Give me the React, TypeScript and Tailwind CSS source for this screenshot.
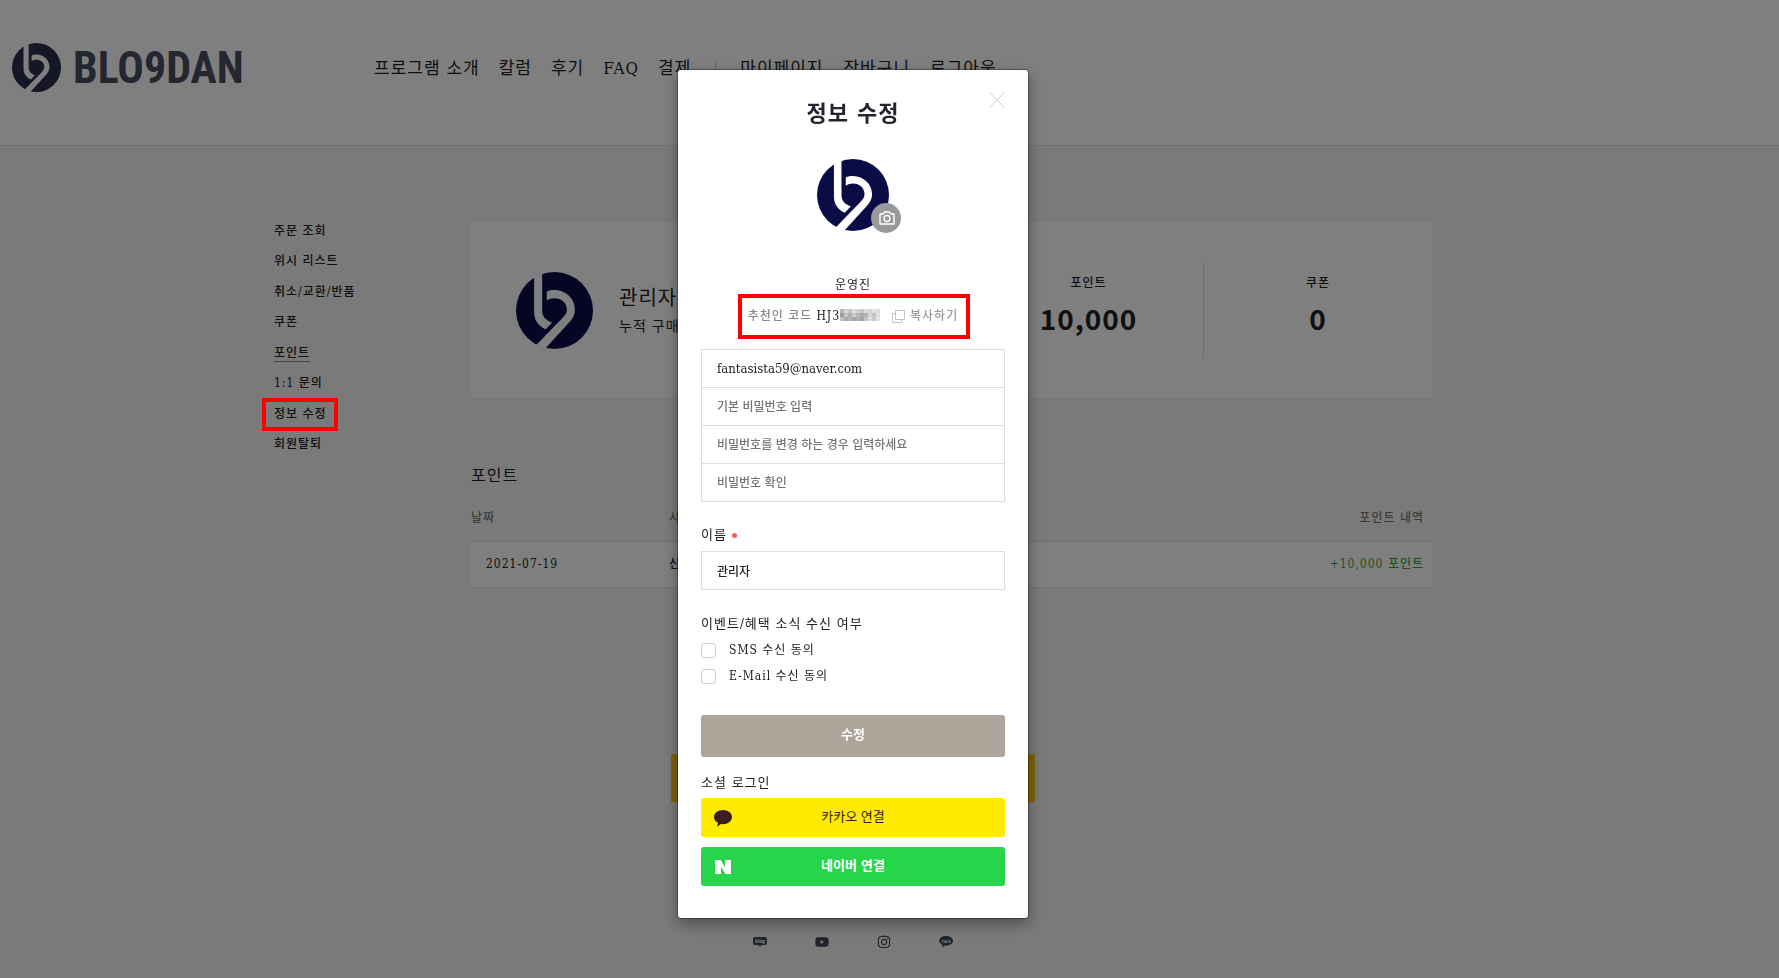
import type { ReactNode } from 'react';
import { FaYoutube, FaInstagram } from 'react-icons/fa';

const mainNav = ['프로그램 소개', '칼럼', '후기', 'FAQ', '결제'];
const userNav = ['마이페이지', '장바구니', '로그아웃'];

const sideMenu = [
  { label: '주문 조회' },
  { label: '위시 리스트' },
  { label: '취소/교환/반품' },
  { label: '쿠폰' },
  { label: '포인트', active: true },
  { label: '1:1 문의' },
  { label: '정보 수정', marked: true },
  { label: '회원탈퇴' },
];

const stats = [
  { label: '포인트', value: '10,000' },
  { label: '쿠폰', value: '0' },
];

const accountFields = [
  { id: 'email', label: '이메일', type: 'email', value: 'fantasista59@naver.com' },
  { id: 'password', label: '기본 비밀번호 입력', type: 'password' },
  { id: 'new-password', label: '비밀번호를 변경 하는 경우 입력하세요', type: 'password' },
  { id: 'confirm-password', label: '비밀번호 확인', type: 'password' },
];

const agreements = [
  { id: 'sms', label: 'SMS 수신 동의' },
  { id: 'mail', label: 'E-Mail 수신 동의' },
];

// grey blocks that hide the rest of the referral code
const mosaic = [
  ['#b4b4b4', '#d2d2d2', '#c4c4c4', '#dcdcdc', '#d0d0d0', '#c8c8c8', '#dedede', '#d4d4d4', '#e2e2e2', '#dadada'],
  ['#9c9c9c', '#c6c6c6', '#b0b0b0', '#cacaca', '#b8b8b8', '#aaaaaa', '#b2b2b2', '#d8d8d8', '#c2c2c2', '#e0e0e0'],
  ['#c0c0c0', '#a8a8a8', '#b4b4b4', '#a6a6a6', '#b0b0b0', '#a2a2a2', '#c4c4c4', '#dcdcdc', '#c8c8c8', '#e4e4e4'],
];

const inputClass =
  'block h-[39px] w-full border border-[#dddddd] bg-white px-[15px] font-medium tracking-normal text-[#212121] placeholder:text-[#757575] outline-none';

function LogoMark({ className }: { className: string }) {
  return (
    <svg viewBox="0 0 100 100" className={className} aria-hidden="true">
      <circle cx="50" cy="50" r="50" fill="currentColor" />
      <g fill="#fff">
        <path d="M23.500 0V52C23.500 63 29 70 38.500 74.500L47 65.500C39 63.500 34 58 34 50V0z" />
        <path d="M40 25.500C43 24 46 23.500 50 23.500C65 23.500 76.500 35 76.500 49C76.500 55 74 60 69.500 65L37.500 100L26 95L60 60C64 56 66 53 66 49C66 40 59 34 50 34C46 34 43 35 40 37z" />
      </g>
    </svg>
  );
}

function Header() {
  return (
    <header className="flex h-[146px] items-start border-b border-[#e5e5e5] bg-white pl-3">
      <a href="#" className="mt-[43px] flex w-[362px] items-center gap-3">
        <LogoMark className="size-[49px] text-[#2a2d4d]" />
        <span className="pt-0.5 font-['Liberation_Sans_Narrow','Roboto_Condensed',sans-serif] text-[44px] leading-[47px] font-bold tracking-normal text-[#484c60]">
          BLO9DAN
        </span>
      </a>
      <nav className="mt-14 flex items-center text-[17px] leading-6">
        <ul className="flex gap-[19px]">
          {mainNav.map((item) => (
            <li key={item}>
              <a href="#">{item}</a>
            </li>
          ))}
        </ul>
        <span className="mx-6 h-3 w-px bg-[#cccccc]" />
        <ul className="flex gap-5">
          {userNav.map((item) => (
            <li key={item}>
              <a href="#">{item}</a>
            </li>
          ))}
        </ul>
      </nav>
    </header>
  );
}

function SideMenu() {
  return (
    <ul className="flex h-[229px] w-[197px] shrink-0 flex-col justify-between text-xs font-medium">
      {sideMenu.map((item) => (
        <li key={item.label} className="relative flex h-4 items-start leading-4">
          <a href="#" className={item.active ? 'border-b border-[#888888]' : ''}>
            {item.label}
          </a>
          {item.marked && (
            <span className="absolute -top-2 -left-3 z-20 h-[33px] w-[76px] border-4 border-[#ff0000]" />
          )}
        </li>
      ))}
    </ul>
  );
}

function Summary() {
  return (
    <section className="flex h-44 items-center bg-white">
      <div className="flex flex-1 items-center pl-[45px]">
        <LogoMark className="size-[77px] text-[#0a0c46]" />
        <div className="ml-[26px]">
          <p className="text-[20px] leading-8">관리자</p>
          <p className="text-sm leading-6">누적 구매금액</p>
        </div>
      </div>
      {stats.map((stat, i) => (
        <dl
          key={stat.label}
          className={
            i === 0
              ? 'flex h-24 w-[229px] flex-col items-center pt-[11px]'
              : 'flex h-24 w-[229px] flex-col items-center border-l border-[#dddddd] pt-[11px]'
          }
        >
          <dt className="text-xs leading-5 font-medium">{stat.label}</dt>
          <dd className="mt-[5px] font-['Noto_Sans_CJK_KR',sans-serif] text-[28px] leading-10 font-bold text-[#212121]">
            {stat.value}
          </dd>
        </dl>
      ))}
    </section>
  );
}

function History() {
  return (
    <section className="mt-[66px]">
      <h2 className="text-base leading-6">포인트</h2>
      <table className="mt-[15px] w-full text-left text-xs font-medium">
        <thead>
          <tr className="h-[38px] text-[#777777]">
            <th className="w-[198px] pb-2 font-medium">날짜</th>
            <th className="pb-2 font-medium">사유</th>
            <th className="pr-2 pb-2 text-right font-medium">포인트 내역</th>
          </tr>
        </thead>
        <tbody>
          <tr className="h-[46px] border-y border-[#e0e0e0] bg-white">
            <td className="pl-[15px]">2021-07-19</td>
            <td>신규가입</td>
            <td className="pr-2 text-right text-[#3fa33f]">+10,000 포인트</td>
          </tr>
        </tbody>
      </table>
    </section>
  );
}

function Footer() {
  return (
    <footer className="mt-[133px] flex items-center justify-center gap-12 text-[#404458]">
      <a href="#" aria-label="블로그">
        <svg viewBox="0 0 14 14" className="size-3.5">
          <path d="M2 2h10a2 2 0 0 1 2 2v4a2 2 0 0 1-2 2H8.500L7 12 5.500 10H2a2 2 0 0 1-2-2V4a2 2 0 0 1 2-2z" fill="currentColor" />
          <text x="7" y="8" textAnchor="middle" fontSize="5" fontWeight="700" fill="#f5f5f5" letterSpacing="0" fontFamily="Roboto">
            blog
          </text>
        </svg>
      </a>
      <a href="#" aria-label="유튜브">
        <FaYoutube className="size-3.5" />
      </a>
      <a href="#" aria-label="인스타그램">
        <FaInstagram className="size-3.5" />
      </a>
      <a href="#" aria-label="카카오톡">
        <svg viewBox="0 0 14 14" className="size-3.5">
          <path d="M7 1c3.900 0 7 2.100 7 4.800s-3.100 4.900-7 4.900l-1.200-.1L3 12.800l.6-2.900C1.500 9.100.2 7.600.2 5.800.2 3.100 3.100 1 7 1z" fill="currentColor" />
          <text x="7" y="7.500" textAnchor="middle" fontSize="4" fontWeight="700" fill="#f5f5f5" letterSpacing="0" fontFamily="Roboto">
            TALK
          </text>
        </svg>
      </a>
    </footer>
  );
}

function SocialButton({ icon, className, children }: { icon: ReactNode; className: string; children: ReactNode }) {
  return (
    <button type="button" className={`relative h-[39px] w-full rounded-[3px] text-[13px] tracking-normal ${className}`}>
      <span className="absolute inset-y-0 left-3 flex w-5 items-center justify-center">{icon}</span>
      {children}
    </button>
  );
}

function ProfileModal() {
  return (
    <div role="dialog" aria-labelledby="modal-title" className="relative mx-auto mt-[70px] w-[350px] rounded-[3px] bg-white px-[23px] pt-[27px] pb-8 shadow-[0_0_0_1px_rgba(0,0,0,0.3),0_5px_15px_rgba(0,0,0,0.4)]">
      <button type="button" aria-label="닫기" className="absolute top-[22px] right-[23px]">
        <svg viewBox="0 0 16 16" className="size-4" stroke="#d0d0d0">
          <path d="M.5.5l15 15M15.500.5l-15 15" />
        </svg>
      </button>
      <h1 id="modal-title" className="text-center text-[22px] leading-8 font-bold text-[#24252e]">
        정보 수정
      </h1>

      <div className="relative mx-auto mt-[30px] size-[72px]">
        <LogoMark className="size-[72px] text-[#0a0c46]" />
        <button type="button" aria-label="사진 변경" className="absolute top-11 left-[54px] flex size-[30px] items-center justify-center rounded-full bg-[#999999]">
          <svg viewBox="0 0 16 14" className="ml-0.5 h-3.5 w-4" fill="none" stroke="#fff" strokeWidth="1.4">
            <path d="M1 3h3.300l1-2h5.400l1 2H15v10H1z" strokeLinejoin="round" />
            <circle cx="8" cy="7.500" r="3" />
          </svg>
        </button>
      </div>

      <p className="mt-11 text-center text-xs leading-5">운영진</p>

      <div className="relative mt-[11px] flex items-center justify-center text-xs leading-5 font-medium">
        <span className="text-[#888888]">추천인 코드</span>
        <span className="ml-1">HJ3</span>
        <svg viewBox="0 0 40 12" className="mb-0.5 h-3 w-10" aria-hidden="true">
          {mosaic.map((row, y) =>
            row.map((fill, x) => <rect key={`${x}-${y}`} x={x * 4} y={y * 4} width="4" height="4" fill={fill} />)
          )}
        </svg>
        <button type="button" className="ml-3 flex items-center gap-[5px] text-[#999999]">
          <svg viewBox="0 0 13 13" className="size-[13px]" fill="none" stroke="#c4c4c4">
            <path d="M3.500.5h9v9h-9zM3.500 3.500h-3v9h9v-3" />
          </svg>
          복사하기
        </button>
        <span className="pointer-events-none absolute -top-3 left-[37px] h-[45px] w-[232px] border-4 border-[#ff0000]" />
      </div>

      <form>
        <div className="mt-[23px] -space-y-px">
          {accountFields.map((field) => (
            <input
              key={field.id}
              type={field.type}
              aria-label={field.label}
              placeholder={field.label}
              defaultValue={field.value}
              className={`${inputClass} ${field.type === 'email' ? 'text-[13px]' : 'text-xs'}`}
            />
          ))}
        </div>

        <label htmlFor="name" className="mt-[23px] flex items-center gap-[5px] text-[13px] leading-5">
          이름
          <span className="size-[5px] rounded-full bg-[#f75d5d]" />
        </label>
        <input id="name" type="text" defaultValue="관리자" className={`${inputClass} mt-1.5 text-xs`} />

        <fieldset className="mt-6">
          <legend className="text-[13px] leading-5">이벤트/혜택 소식 수신 여부</legend>
          <div className="pt-[3px]">
            {agreements.map((item) => (
              <label key={item.id} htmlFor={item.id} className="flex h-[26px] items-center gap-[13px] text-xs">
                <input
                  id={item.id}
                  type="checkbox"
                  className="size-[15px] appearance-none rounded-[3px] border border-[#cfcfd4] bg-white"
                />
                {item.label}
              </label>
            ))}
          </div>
        </fieldset>

        <button type="submit" className="mt-[26px] h-[42px] w-full rounded-[3px] bg-[#ada49a] pb-0.5 text-[13px] font-bold tracking-normal text-white">
          수정
        </button>
      </form>

      <h2 className="mt-4 text-[13px] leading-5">소셜 로그인</h2>
      <SocialButton
        className="mt-[5px] bg-[#ffeb00] pb-px text-[#3c1e1e]"
        icon={
          <svg viewBox="0 0 20 18" className="h-[18px] w-5" fill="#3c1e1e">
            <path d="M10 1c5 0 9 3 9 7s-4 7.200-9 7.200l-2-.2-4 2.800 1-4C2.500 12.600 1 10.500 1 8c0-4 4-7 9-7z" />
          </svg>
        }
      >
        카카오 연결
      </SocialButton>
      <SocialButton
        className="mt-2.5 bg-[#27d54b] pb-0.5 font-bold text-white"
        icon={
          <svg viewBox="0 0 16 14" className="h-3.5 w-4" fill="#fff">
            <path d="M0 0h5.500l4.500 7V0h6v14h-5.500L6 7v7H0z" />
          </svg>
        }
      >
        네이버 연결
      </SocialButton>
    </div>
  );
}

export default function App() {
  return (
    <div className="min-h-screen bg-[#f5f5f5] pb-5 font-['DejaVu_Serif_Condensed','Noto_Sans_CJK_KR',sans-serif] tracking-[1px] text-[#212121]">
      <Header />
      <div className="pr-[73px]">
        <div className="mx-auto flex max-w-[1158px] pt-[76px]">
          <div className="pt-px">
            <SideMenu />
          </div>
          <main className="min-w-0 flex-1">
            <Summary />
            <History />
          </main>
        </div>
        <div className="mx-auto mt-[166px] h-12 w-[364px] bg-[#ffc812]" />
        <Footer />
      </div>

      <div className="fixed inset-0 z-10 overflow-hidden bg-black/50 pr-[73px]">
        <ProfileModal />
      </div>
    </div>
  );
}
